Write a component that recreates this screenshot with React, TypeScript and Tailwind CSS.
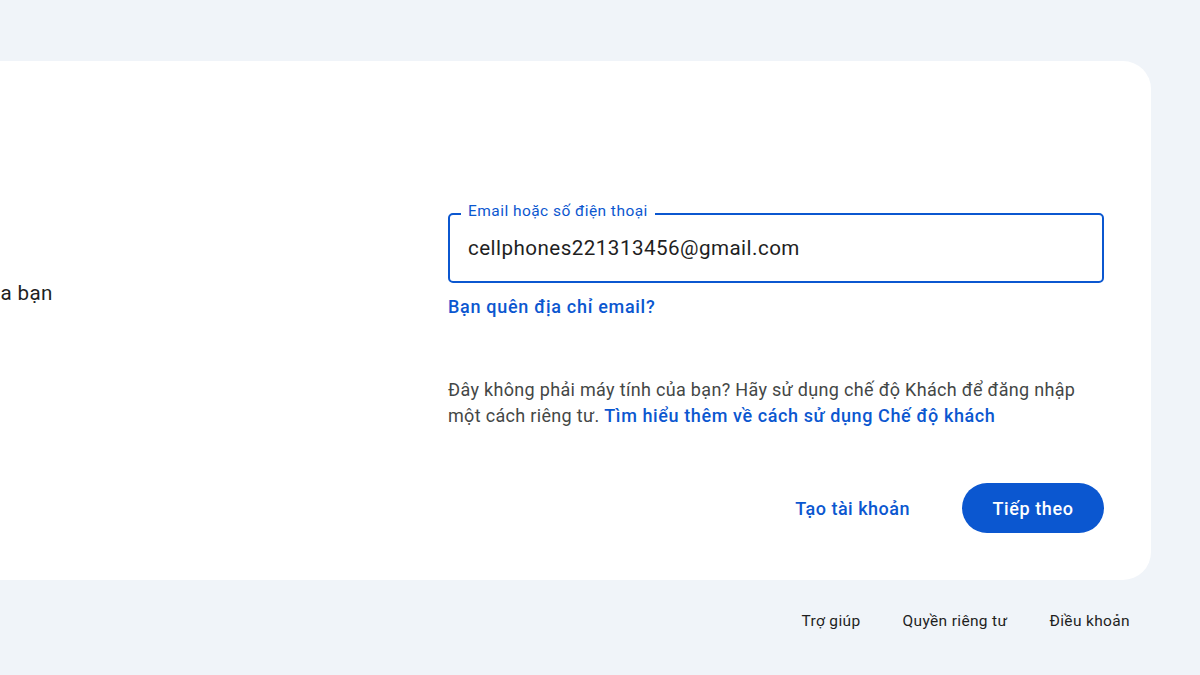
import React from "react";

const footerLinks = ["Trợ giúp", "Quyền riêng tư", "Điều khoản"];

export default function App() {
  return (
    <div
      className="w-[1200px] h-[675px] overflow-hidden bg-[#f0f4f9] text-[#1f1f1f]"
      style={{ fontFamily: "Roboto, 'Noto Sans', Arial, sans-serif" }}
    >
      <div className="pt-[61px] pr-[49px]">
        {/* card */}
        <div className="-ml-[310px] flex h-[519px] rounded-[28px] bg-white pl-[33px] pr-[47px]">
          {/* left column, mostly off screen */}
          <div className="flex-1 pt-[80px]">
            <h1 className="text-[45px] leading-[52px] text-[#1f1f1f]">Đăng nhập</h1>
            <p className="mt-[86px] text-[20.6px] leading-[28px] tracking-[0.4px] text-[#1f1f1f]">
              Sử dụng Tài khoản Google của bạn
            </p>
          </div>

          {/* form column */}
          <div className="w-[656px] pt-[152px]">
            <div className="relative h-[70px] rounded-[5px] border-2 border-[#0b57d0] flex items-center pl-[18px]">
              <span className="absolute -top-[14px] left-[11px] bg-white px-[7px] text-[15.5px] leading-[20px] tracking-[0.45px] text-[#0b57d0]">
                Email hoặc số điện thoại
              </span>
              <span className="text-[20.6px] leading-[24px] tracking-[0.45px] text-[#1f1f1f]">
                cellphones221313456@gmail.com
              </span>
            </div>

            <div className="mt-[14px] text-[18px] leading-[20px] tracking-[0.7px] font-medium text-[#0b57d0]">
              Bạn quên địa chỉ email?
            </div>

            <p className="mt-[60px] text-[18px] leading-[26px] tracking-[0.32px] text-[#444746]">
              Đây không phải máy tính của bạn? Hãy sử dụng chế độ Khách để đăng nhập
              một cách riêng tư.{" "}
              <span className="font-medium tracking-[0.6px] text-[#0b57d0]">
                Tìm hiểu thêm về cách sử dụng Chế độ khách
              </span>
            </p>

            <div className="mt-[54px] flex items-center justify-end">
              <button className="h-[50px] px-[15px] rounded-full text-[18px] tracking-[0.5px] font-medium text-[#0b57d0]">
                Tạo tài khoản
              </button>
              <button className="ml-[37px] h-[50px] w-[142px] rounded-full bg-[#0b57d0] text-[18px] tracking-[0.6px] font-medium text-white">
                Tiếp theo
              </button>
            </div>
          </div>
        </div>
      </div>

      {/* footer */}
      <div className="mt-[31px] flex justify-end gap-[42px] pr-[70px] text-[15.5px] leading-[20px] tracking-[0.35px] text-[#1f1f1f]">
        {footerLinks.map((l) => (
          <span key={l}>{l}</span>
        ))}
      </div>
    </div>
  );
}
